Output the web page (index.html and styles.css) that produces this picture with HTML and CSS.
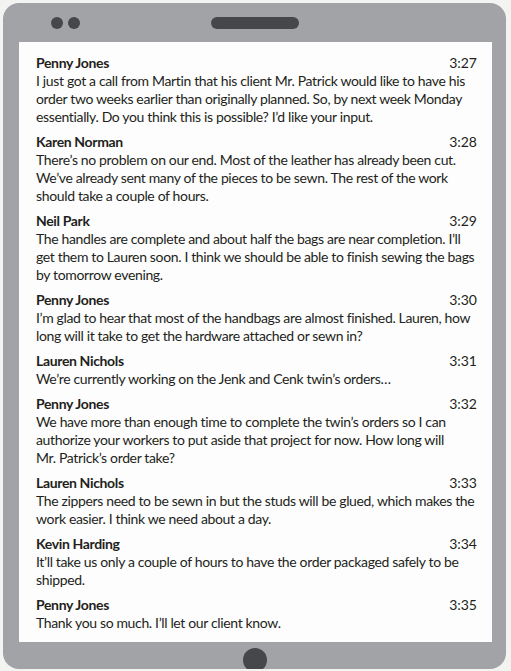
FILE: index.html
```html
<!DOCTYPE html>
<html lang="en">
<head>
<meta charset="utf-8">
<title>Chat</title>
<link rel="stylesheet" href="styles.css">
</head>
<body>
<div class="tablet">
  <div class="topbar">
    <div class="dots"><span class="dot"></span><span class="dot"></span></div>
    <div class="speaker"></div>
    <div></div>
  </div>
  <div class="screen">
    <div class="msg">
      <div class="head"><span class="name">Penny Jones</span><span class="time">3:27</span></div>
      <p class="text">I just got a call from Martin that his client Mr. Patrick would like to have his<br>order two weeks earlier than originally planned. So, by next week Monday<br>essentially. Do you think this is possible? I’d like your input.</p>
    </div>
    <div class="msg">
      <div class="head"><span class="name">Karen Norman</span><span class="time">3:28</span></div>
      <p class="text">There’s no problem on our end. Most of the leather has already been cut.<br>We’ve already sent many of the pieces to be sewn. The rest of the work<br>should take a couple of hours.</p>
    </div>
    <div class="msg">
      <div class="head"><span class="name">Neil Park</span><span class="time">3:29</span></div>
      <p class="text">The handles are complete and about half the bags are near completion. I’ll<br>get them to Lauren soon. I think we should be able to finish sewing the bags<br>by tomorrow evening.</p>
    </div>
    <div class="msg">
      <div class="head"><span class="name">Penny Jones</span><span class="time">3:30</span></div>
      <p class="text">I’m glad to hear that most of the handbags are almost finished. Lauren, how<br>long will it take to get the hardware attached or sewn in?</p>
    </div>
    <div class="msg">
      <div class="head"><span class="name">Lauren Nichols</span><span class="time">3:31</span></div>
      <p class="text">We’re currently working on the Jenk and Cenk twin’s orders…</p>
    </div>
    <div class="msg">
      <div class="head"><span class="name">Penny Jones</span><span class="time">3:32</span></div>
      <p class="text">We have more than enough time to complete the twin’s orders so I can<br>authorize your workers to put aside that project for now. How long will<br>Mr. Patrick’s order take?</p>
    </div>
    <div class="msg">
      <div class="head"><span class="name">Lauren Nichols</span><span class="time">3:33</span></div>
      <p class="text">The zippers need to be sewn in but the studs will be glued, which makes the<br>work easier. I think we need about a day.</p>
    </div>
    <div class="msg">
      <div class="head"><span class="name">Kevin Harding</span><span class="time">3:34</span></div>
      <p class="text">It’ll take us only a couple of hours to have the order packaged safely to be<br>shipped.</p>
    </div>
    <div class="msg">
      <div class="head"><span class="name">Penny Jones</span><span class="time">3:35</span></div>
      <p class="text">Thank you so much. I’ll let our client know.</p>
    </div>
  </div>
  <div class="bottombar"><span class="home"></span></div>
</div>
</body>
</html>
```
FILE: styles.css
```css
html, body {
  margin: 0;
  padding: 0;
  background: #f3f3f2;
}
body {
  width: 511px;
  height: 671px;
  overflow: hidden;
  font-family: "Lato", "Open Sans", sans-serif;
  color: #231f20;
}
.tablet {
  width: 503px;
  height: 666px;
  margin: 3px 0 0 3px;
  background: #a1a3a7;
  border-radius: 16px;
  display: flex;
  flex-direction: column;
  overflow: hidden;
}
.topbar {
  height: 39px;
  flex: none;
  display: grid;
  grid-template-columns: 1fr auto 1fr;
  align-items: center;
  padding: 0 48px;
}
.dots {
  display: flex;
  gap: 5px;
}
.dot {
  width: 12px;
  height: 12px;
  border-radius: 50%;
  background: #45474a;
}
.speaker {
  width: 88px;
  height: 12px;
  border-radius: 6px;
  background: #45474a;
}
.screen {
  flex: none;
  height: 600px;
  margin: 0 14px 0 16px;
  background: #fdfdfd;
  padding: 11px 15px 0 17px;
  box-sizing: border-box;
  display: flex;
  flex-direction: column;
  gap: 6px;
}
.msg {
  font-size: 14px;
  line-height: 18px;
  letter-spacing: -0.35px;
}
.head {
  display: flex;
  justify-content: space-between;
  line-height: 19px;
}
.name {
  font-weight: 700;
}
.time {
  font-weight: 400;
  letter-spacing: 0;
}
.text {
  margin: 0;
  white-space: nowrap;
}
.bottombar {
  flex: 1;
  display: flex;
  justify-content: center;
  align-items: flex-start;
  padding-top: 6px;
}
.home {
  width: 24px;
  height: 24px;
  border-radius: 50%;
  background: #45474a;
  flex: none;
}
```
